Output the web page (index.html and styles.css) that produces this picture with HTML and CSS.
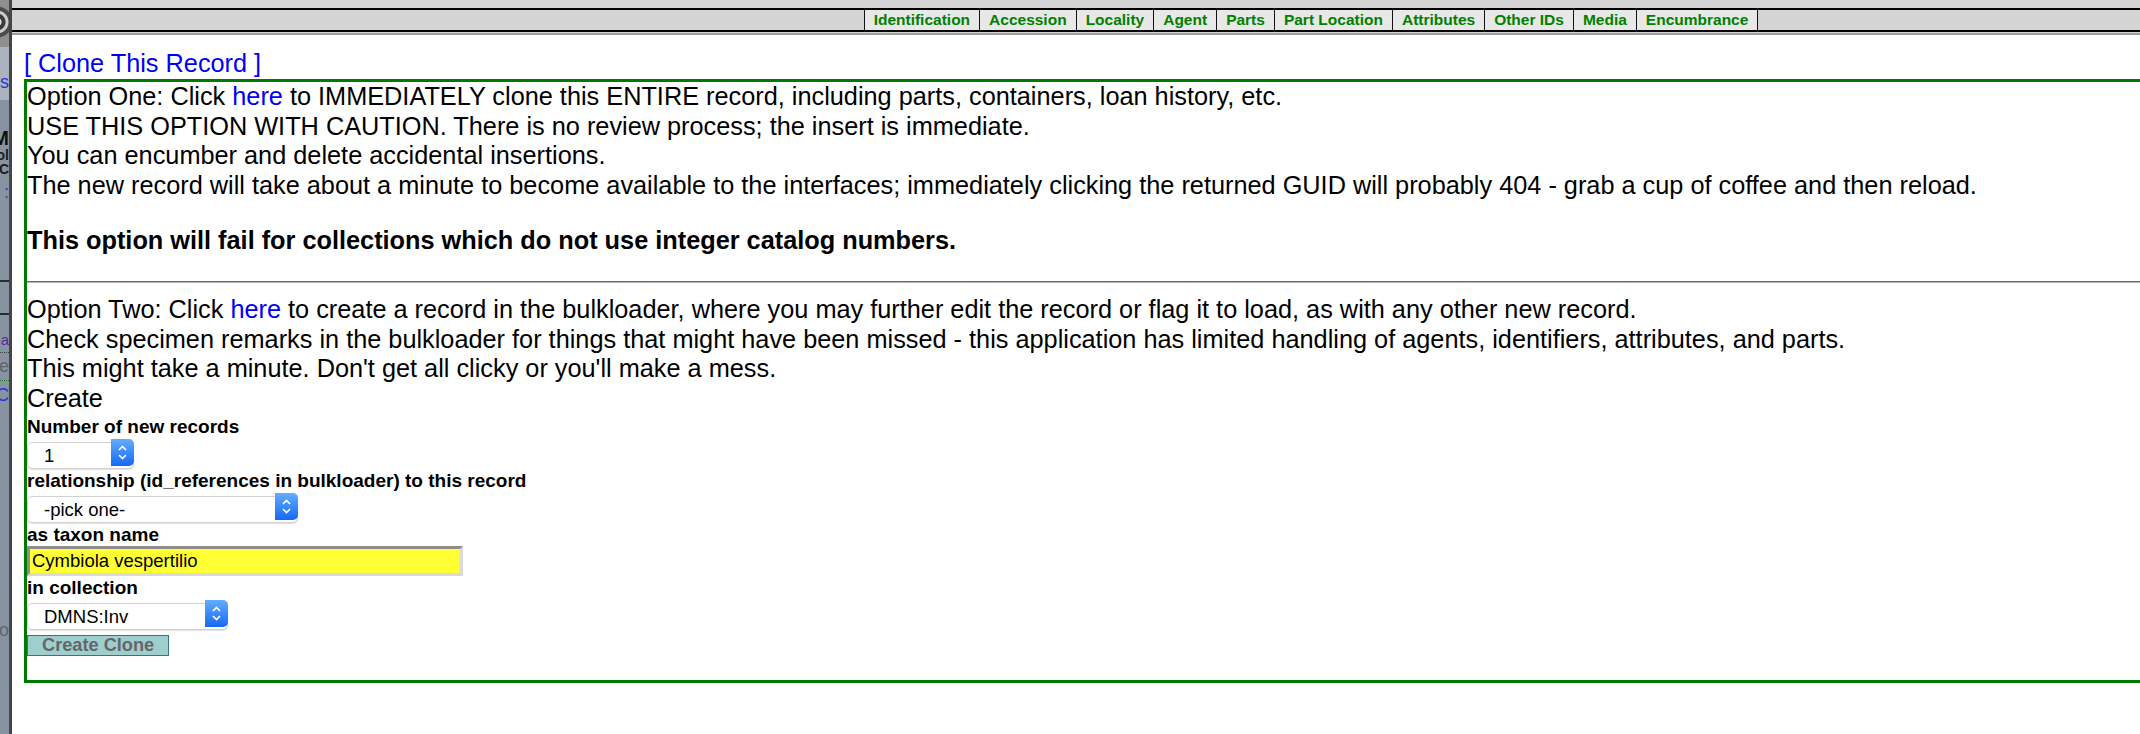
FILE: index.html
```html
<!DOCTYPE html>
<html lang="en">
<head>
    <meta charset="UTF-8">
    <meta name="viewport" content="width=device-width, initial-scale=1.0">
    <title>Clone This Record</title>
    <link rel="stylesheet" href="styles.css">
</head>
<body>
    <!-- page behind the overlay, only its right edge peeks out -->
    <div class="backdrop">
        <div class="bd-logo"></div>
        <div class="bd-band"><div class="bd-link">s</div></div>
        <div class="bd-head">M</div>
        <div class="bd-sub">ol</div>
        <div class="bd-sub">C</div>
        <div class="bd-link bd-edit">:</div>
        <div class="bd-rule bd-rule-one"></div>
        <div class="bd-rule bd-rule-two"></div>
        <div class="bd-visited">a</div>
        <div class="bd-dots"></div>
        <div class="bd-grey">e</div>
        <div class="bd-dots bd-dots-green"></div>
        <div class="bd-link bd-cat">C</div>
        <div class="bd-grey bd-low">o</div>
    </div>

    <div class="frame">
        <div class="sheet">
            <!-- record navigation -->
            <div class="topbar">
                <ul class="tabs">
                    <li><a href="#">Identification</a></li>
                    <li><a href="#">Accession</a></li>
                    <li><a href="#">Locality</a></li>
                    <li><a href="#">Agent</a></li>
                    <li><a href="#">Parts</a></li>
                    <li><a href="#">Part Location</a></li>
                    <li><a href="#">Attributes</a></li>
                    <li><a href="#">Other IDs</a></li>
                    <li><a href="#">Media</a></li>
                    <li><a href="#">Encumbrance</a></li>
                </ul>
            </div>

            <div class="clone">
                <a class="clone-title" href="#">[ Clone This Record ]</a>
                <div class="clone-box">
                    Option One: Click <a href="#">here</a> to IMMEDIATELY clone this ENTIRE record, including parts, containers, loan history, etc.<br>
                    USE THIS OPTION WITH CAUTION. There is no review process; the insert is immediate.<br>
                    You can encumber and delete accidental insertions.<br>
                    The new record will take about a minute to become available to the interfaces; immediately clicking the returned GUID will probably 404 - grab a cup of coffee and then reload.
                    <p class="warn">This option will fail for collections which do not use integer catalog numbers.</p>
                    <hr>
                    Option Two: Click <a href="#">here</a> to create a record in the bulkloader, where you may further edit the record or flag it to load, as with any other new record.<br>
                    Check specimen remarks in the bulkloader for things that might have been missed - this application has limited handling of agents, identifiers, attributes, and parts.<br>
                    This might take a minute. Don't get all clicky or you'll make a mess.

                    <form class="clone-form" id="cloneForm">
                        <div class="form-title">Create</div>

                        <label class="field-label" for="numRecs">Number of new records</label>
                        <span class="picker picker-num">
                            <select id="numRecs" name="numRecs">
                                <option>1</option>
                                <option>2</option>
                                <option>3</option>
                            </select>
                            <svg class="picker-arrows" viewBox="0 0 23 27">
                                <defs>
                                    <linearGradient id="stepBlue" x1="0" y1="0" x2="0" y2="1">
                                        <stop offset="0" stop-color="#63adfc"/>
                                        <stop offset="1" stop-color="#1669f3"/>
                                    </linearGradient>
                                </defs>
                                <path d="M0 0H18A5 5 0 0 1 23 5V22A5 5 0 0 1 18 27H0Z" fill="url(#stepBlue)"/>
                                <polyline points="8,11 11.5,7.5 15,11" fill="none" stroke="#fff" stroke-width="1.7"/>
                                <polyline points="8,16 11.5,19.5 15,16" fill="none" stroke="#fff" stroke-width="1.7"/>
                            </svg>
                        </span>

                        <label class="field-label" for="relation">relationship (id_references in bulkloader) to this record</label>
                        <span class="picker picker-rel">
                            <select id="relation" name="relation">
                                <option>-pick one-</option>
                                <option>same individual as</option>
                                <option>offspring of</option>
                            </select>
                            <svg class="picker-arrows" viewBox="0 0 23 27">
                                <path d="M0 0H18A5 5 0 0 1 23 5V22A5 5 0 0 1 18 27H0Z" fill="url(#stepBlue)"/>
                                <polyline points="8,11 11.5,7.5 15,11" fill="none" stroke="#fff" stroke-width="1.7"/>
                                <polyline points="8,16 11.5,19.5 15,16" fill="none" stroke="#fff" stroke-width="1.7"/>
                            </svg>
                        </span>

                        <label class="field-label" for="taxonName">as taxon name</label>
                        <input class="taxon" type="text" id="taxonName" name="taxonName" value="Cymbiola vespertilio">

                        <label class="field-label" for="collection">in collection</label>
                        <span class="picker picker-coll">
                            <select id="collection" name="collection">
                                <option>DMNS:Inv</option>
                                <option>DMNS:Bird</option>
                                <option>DMNS:Mamm</option>
                            </select>
                            <svg class="picker-arrows" viewBox="0 0 23 27">
                                <path d="M0 0H18A5 5 0 0 1 23 5V22A5 5 0 0 1 18 27H0Z" fill="url(#stepBlue)"/>
                                <polyline points="8,11 11.5,7.5 15,11" fill="none" stroke="#fff" stroke-width="1.7"/>
                                <polyline points="8,16 11.5,19.5 15,16" fill="none" stroke="#fff" stroke-width="1.7"/>
                            </svg>
                        </span>

                        <button class="clone-btn" type="submit">Create Clone</button>
                    </form>
                </div>
            </div>
        </div>
    </div>
</body>
</html>
```

FILE: styles.css
```css
body {
    margin: 0;
    display: flex;
    height: 734px;
    overflow: hidden;
    font-family: "Liberation Sans", Arial, Helvetica, sans-serif;
    background-color: #fff;
    color: #000;
}

/* strip of the underlying page */
.backdrop {
    flex: 0 0 9px;
    overflow: hidden;
    background-color: #8893a1;
    border-right: 3px solid #454545;
    direction: rtl;
    white-space: nowrap;
}
.bd-logo {
    height: 47px;
    background: radial-gradient(circle at -3px 22px, #e6e6e6 0 4px, #3c3c3c 5px 8px, #cdcdcd 9px 11px, #4c4c4c 12px 15px, #8f8f8f 16px);
}
.bd-band {
    height: 53px;
    background-color: #aab3be;
}
.bd-band .bd-link {
    padding-top: 25px;
}
.bd-link {
    font-size: 18px;
    line-height: 20px;
    color: #2438d4;
}
.bd-head {
    margin-top: 28px;
    font-size: 20px;
    line-height: 20px;
    font-weight: bold;
    color: #111;
}
.bd-sub {
    font-size: 14px;
    line-height: 14px;
    font-weight: bold;
    color: #1b1b1b;
}
.bd-edit {
    margin-top: 6px;
}
.bd-rule {
    height: 2px;
    background-color: #2c2c2c;
}
.bd-rule-one {
    margin-top: 78px;
}
.bd-rule-two {
    margin-top: 31px;
}
.bd-visited {
    margin-top: 17px;
    font-size: 15px;
    line-height: 16px;
    color: #5a2a9a;
}
.bd-dots {
    margin-top: 4px;
    border-top: 1px dotted #3b3b3b;
}
.bd-dots-green {
    border-top-color: #1f7a1f;
}
.bd-grey {
    margin-top: 3px;
    font-size: 18px;
    line-height: 20px;
    color: #5e6670;
}
.bd-cat {
    margin-top: 4px;
}
.bd-low {
    margin-top: 215px;
}

/* overlay contents */
.frame {
    flex: 1;
    overflow: hidden;
}
.sheet {
    width: 2598px;
}
.topbar {
    padding-top: 8px;
    padding-bottom: 1px;
    background-color: #d4d4d4;
    border-bottom: 2px solid #9d9d9d;
}
.tabs {
    display: flex;
    justify-content: center;
    margin: 0;
    padding: 0;
    list-style: none;
    border-top: 2px solid #000;
    border-bottom: 2px solid #000;
}
.tabs li {
    background-color: #e8e8e8;
    border-right: 1px solid #111;
}
.tabs li:first-child {
    border-left: 1px solid #111;
}
.tabs a {
    display: block;
    padding: 0 9px;
    font-size: 15.5px;
    line-height: 20px;
    font-weight: bold;
    color: #008000;
    text-decoration: none;
}

.clone {
    padding: 13px 0 0 12px;
}
.clone a {
    color: #0000f5;
    text-decoration: none;
}
.clone-title {
    display: block;
    font-size: 25.3px;
    line-height: 30px;
}
.clone-box {
    margin-top: 1px;
    border: 3px solid #007a00;
    font-size: 25.3px;
    line-height: 29.7px;
}
.warn {
    margin: 25px 0;
    font-weight: bold;
}
.clone-box hr {
    margin: 0 0 12.5px;
    border: 0;
    border-top: 1px solid #6c6c6c;
    border-bottom: 1px solid #b8b8b8;
}

.clone-form {
    display: flex;
    flex-direction: column;
    align-items: flex-start;
    margin: 0 0 24px;
}
.form-title {
    margin-bottom: 2px;
}
.field-label {
    font-size: 19px;
    line-height: 22px;
    font-weight: bold;
}

.picker {
    position: relative;
    display: block;
    height: 27px;
    margin: 1px 0 4px;
}
.picker-num {
    width: 107px;
}
.picker-rel {
    width: 271px;
}
.picker-coll {
    width: 201px;
}
.picker select {
    -webkit-appearance: none;
    appearance: none;
    box-sizing: border-box;
    width: 100%;
    height: 27px;
    margin: 0;
    padding: 0 0 0 16px;
    border: 1px solid #d2d2d2;
    border-radius: 5px;
    background-color: #fff;
    box-shadow: 0 1px 1px rgba(0, 0, 0, 0.12);
    font-family: inherit;
    font-size: 18.5px;
    color: #000;
}
.picker-arrows {
    position: absolute;
    top: 0;
    right: 0;
    width: 23px;
    height: 27px;
    pointer-events: none;
}

.taxon {
    box-sizing: border-box;
    width: 436px;
    height: 30px;
    margin: 0 0 1px;
    padding: 0 2px;
    border: 3px solid;
    border-color: #8e8e8e #dadada #dadada #8e8e8e;
    background-color: #ffff33;
    font-family: inherit;
    font-size: 18.5px;
    color: #000;
}

.clone-btn {
    margin-top: 4px;
    height: 21px;
    padding: 0 14px;
    border: 1px solid #3d7373;
    background-color: #9ecfcf;
    color: #666;
    font-family: inherit;
    font-size: 18.2px;
    font-weight: bold;
    line-height: 19px;
}
```
